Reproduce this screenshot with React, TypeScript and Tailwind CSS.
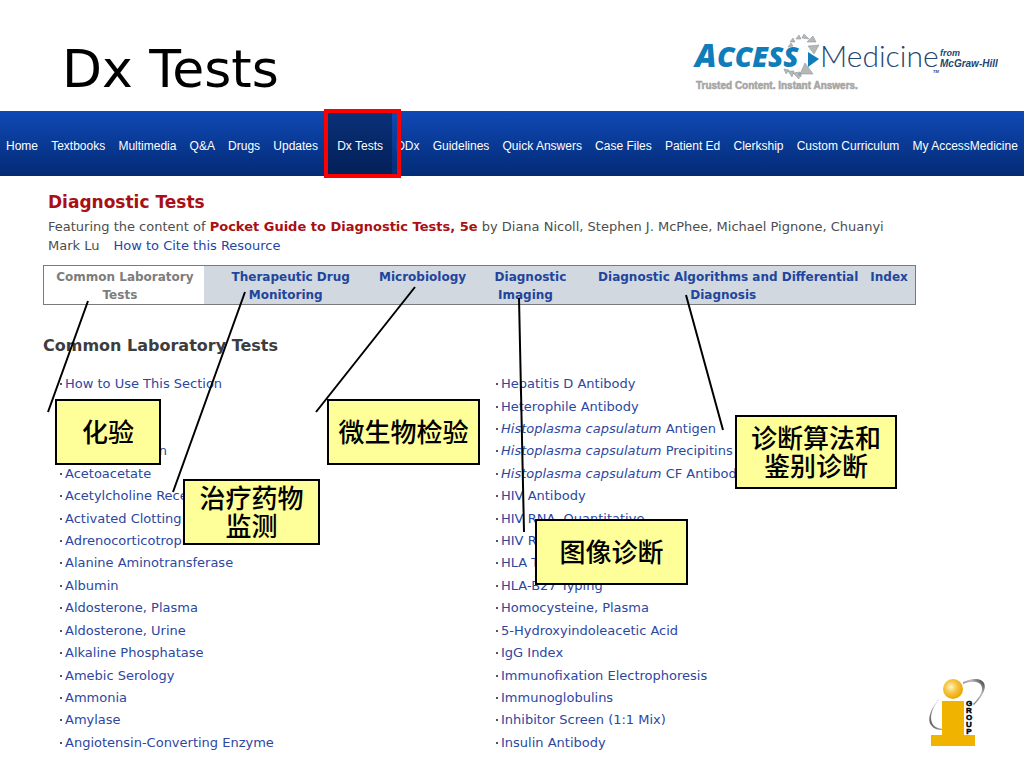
import type { ReactNode } from "react";

const navItems = [
    "Home", "Textbooks", "Multimedia", "Q&A", "Drugs", "Updates", "Dx Tests", "DDx",
    "Guidelines", "Quick Answers", "Case Files", "Patient Ed", "Clerkship",
    "Custom Curriculum", "My AccessMedicine",
];

const tabs = [
    ["Common Laboratory", "Tests"],
    ["Therapeutic Drug", "Monitoring"],
    ["Microbiology"],
    ["Diagnostic", "Imaging"],
    ["Diagnostic Algorithms and Differential", "Diagnosis"],
    ["Index"],
];

// empty strings are blank rows in the index
const leftTests = [
    "How to Use This Section", "", "", "Acetaminophen", "Acetoacetate",
    "Acetylcholine Receptor Antibody", "Activated Clotting Time",
    "Adrenocorticotropic Hormone", "Alanine Aminotransferase", "Albumin",
    "Aldosterone, Plasma", "Aldosterone, Urine", "Alkaline Phosphatase",
    "Amebic Serology", "Ammonia", "Amylase", "Angiotensin-Converting Enzyme",
];

const rightTests: ReactNode[] = [
    "Hepatitis D Antibody",
    "Heterophile Antibody",
    <><i>Histoplasma capsulatum</i> Antigen</>,
    <><i>Histoplasma capsulatum</i> Precipitins</>,
    <><i>Histoplasma capsulatum</i> CF Antibody</>,
    "HIV Antibody", "HIV RNA, Quantitative", "HIV Resistance Testing", "HLA Typing",
    "HLA-B27 Typing", "Homocysteine, Plasma", "5-Hydroxyindoleacetic Acid",
    "IgG Index", "Immunofixation Electrophoresis", "Immunoglobulins",
    "Inhibitor Screen (1:1 Mix)", "Insulin Antibody",
];

const AccessLogo = () => {
    return (
        <svg width="312" height="64" viewBox="690 32 312 64" role="img" aria-label="Access Medicine">
            <g fill="#0f7dba" fontFamily="'Open Sans', sans-serif" fontWeight="800" fontStyle="italic">
                <text x="695" y="67" fontSize="32">A</text>
                <text x="717" y="67" fontSize="28">CCESS</text>
            </g>
            <path d="M808 52l11 7-11 8z" fill="#0f7dba" />
            <g fill="#b5b7b9" stroke="#96989a" strokeWidth="0.6">
                <path d="M788 47l3-4 2 3zM790 42l3-4 2 4zM796 39l3-4 2 4zM802 38l2-4 5 5zM807 42l6-6 3 6zM808 46l11-1-5 9z" />
                <path d="M784 69l5 1-3 4zM788 71l6 0-2 6zM793 73l7-1-1 7zM798 74l3-1 0 4zM800 74l5-11 8 11z" />
            </g>
            <text x="820" y="67" fill="#24456f" fontSize="30" fontFamily="Lato, sans-serif" fontWeight="300">Medicine</text>
            <g fill="#24456f" fontFamily="'Liberation Sans', sans-serif" fontWeight="700" fontStyle="italic">
                <text x="940" y="56" fontSize="9">from</text>
                <text x="940" y="67" fontSize="10">McGraw-Hill</text>
                <text x="933" y="73" fontSize="4">TM</text>
            </g>
            <text x="696" y="89" fill="#a5a5a5" stroke="#a5a5a5" strokeWidth="0.5" fontSize="10" fontFamily="'Liberation Sans', sans-serif" fontWeight="700">Trusted Content. Instant Answers.</text>
        </svg>
    );
};

const GroupLogo = () => {
    return (
        <svg className="absolute right-[34px] bottom-[18px]" width="64" height="76" viewBox="926 674 64 76" role="img" aria-label="i Group">
            <defs>
                <radialGradient id="ball" cx="0.4" cy="0.4" r="0.6">
                    <stop offset="0" stopColor="#fff3c4" />
                    <stop offset="0.5" stopColor="#f7c544" />
                    <stop offset="1" stopColor="#e9a800" />
                </radialGradient>
                <linearGradient id="ring" x1="0" y1="1" x2="1" y2="0">
                    <stop offset="0" stopColor="#333" />
                    <stop offset="0.3" stopColor="#888" />
                    <stop offset="0.65" stopColor="#bbb" />
                    <stop offset="0.9" stopColor="#555" />
                    <stop offset="1" stopColor="#aaa" />
                </linearGradient>
            </defs>
            <path d="M941 697c-10 10-15 23-9 29 2 3 6 4 11 4v-1c-17-1-14-19-2-32z" fill="url(#ring)" />
            <path d="M963 682c10-4 18-4 21 1 3 6-3 15-10 22l-1-1c7-7 11-14 8-19-3-4-10-4-18-1z" fill="url(#ring)" />
            <circle cx="953" cy="689" r="10" fill="url(#ball)" />
            <path d="M942 701h22v34h11v11h-44v-11h11z" fill="#efb300" />
            <g fontSize="8" fontFamily="'Liberation Sans', sans-serif" fontWeight="700" stroke="#000" strokeWidth="0.5" textAnchor="middle">
                <text x="969" y="706">G</text>
                <text x="969" y="713">R</text>
                <text x="969" y="720">O</text>
                <text x="969" y="727">U</text>
                <text x="969" y="734">P</text>
            </g>
        </svg>
    );
};

const TestList = ({ items }: { items: ReactNode[] }) => {
    return (
        <ul className="grid auto-rows-fr items-center">
            {items.map((item, i) => (
                <li key={i} className="flex items-center gap-[3px] whitespace-nowrap">
                    {item && <span className="size-[2px] bg-[#555555]"></span>}
                    {item && <a href="#" className="text-[#2c479f]">{item}</a>}
                </li>
            ))}
        </ul>
    );
};

const tab = "pt-[2px] whitespace-nowrap";
const callout = "absolute flex items-center justify-center border-2 border-black bg-[#ffff99] pb-[2px] text-center text-[26px] leading-[28px] font-medium text-black font-['Noto_Sans_CJK_SC',sans-serif]";

const App = () => {
    return (
        <div className="relative flex min-h-screen flex-col overflow-hidden bg-white font-['DejaVu_Sans',Verdana,sans-serif] text-[13px]">
            <header className="flex h-[111px] items-center justify-between pt-[16px] pr-[22px] pl-[62px]">
                <h1 className="pt-[10px] text-[52px] leading-[60px] text-black">Dx Tests</h1>
                <AccessLogo />
            </header>

            <nav className="flex h-[65px] items-stretch justify-between bg-linear-to-b from-[#1049b6] to-[#042b75] px-[6px] font-['Liberation_Sans',Arial,sans-serif] text-[12px] text-white">
                {navItems.map((item) => (
                    item === "Dx Tests" ? (
                        <a key={item} href="#" className="relative -mr-[9px] -ml-[3px] flex items-center bg-linear-to-b from-[#0a3178] to-[#031f58] px-[9px] pt-[5px] whitespace-nowrap">
                            {item}
                            <span className="absolute -top-[2px] -right-[9px] -bottom-[2px] -left-[4px] z-10 border-4 border-[#ff0000]"></span>
                        </a>
                    ) : (
                        <a key={item} href="#" className="flex items-center pt-[5px] whitespace-nowrap">{item}</a>
                    )
                ))}
            </nav>

            <main className="flex flex-1 flex-col pr-[108px] pb-[14px] pl-[43px]">
                <section className="pt-[14px] pl-[5px] leading-[19px] text-[#4d4d4d]">
                    <h2 className="pb-[3px] text-[17px] leading-[24px] font-bold text-[#a90f14]">Diagnostic Tests</h2>
                    <p>
                        Featuring the content of <b className="text-[#a90f14]">Pocket Guide to Diagnostic Tests, 5e</b> by Diana Nicoll, Stephen J. McPhee, Michael Pignone, Chuanyi Mark Lu
                        <a href="#" className="ml-[14px] text-[#2446a6]">How to Cite this Resource</a>
                    </p>
                </section>

                <nav className="mt-[10px] grid grid-cols-[160fr_164fr_100fr_116fr_280fr_52fr] border border-[#7a7a7a] bg-[#d1d8df] text-center text-[12px] leading-[18px] font-bold text-[#1f459c]">
                    {tabs.map((lines, i) => (
                        <a key={lines[0]} href="#" className={i === 0 ? `${tab} bg-white pr-[8px] indent-[10px] text-[#7d7d7d]` : i === 5 ? tab : `${tab} indent-[10px]`}>
                            {lines[0]}
                            {lines[1] && <br />}
                            {lines[1]}
                        </a>
                    ))}
                </nav>

                <h3 className="mt-[29px] mb-[15px] text-[16px] leading-[24px] font-bold text-[#3d3d3d]">Common Laboratory Tests</h3>

                <div className="grid flex-1 grid-cols-[436fr_420fr] pl-[17px] leading-[20px]">
                    <TestList items={leftTests} />
                    <TestList items={rightTests} />
                </div>
            </main>

            {/* translated labels and the lines that tie them to the tabs */}
            <svg className="pointer-events-none absolute top-0 left-0" width="1024" height="768" stroke="#000" strokeWidth="2" aria-hidden="true">
                <path d="M88 301L48 412M245 292L173 492M415 287L316 412M519 298L524 532M686 295L723 430" />
            </svg>
            <div className={`${callout} top-[399px] left-[55px] h-[66px] w-[106px]`}>化验</div>
            <div className={`${callout} top-[479px] left-[183px] h-[66px] w-[137px]`}>治疗药物<br />监测</div>
            <div className={`${callout} top-[399px] left-[327px] h-[66px] w-[153px]`}>微生物检验</div>
            <div className={`${callout} top-[519px] left-[535px] h-[66px] w-[153px]`}>图像诊断</div>
            <div className={`${callout} top-[415px] left-[735px] h-[74px] w-[162px]`}>诊断算法和<br />鉴别诊断</div>

            <GroupLogo />
        </div>
    );
};

export default App;
